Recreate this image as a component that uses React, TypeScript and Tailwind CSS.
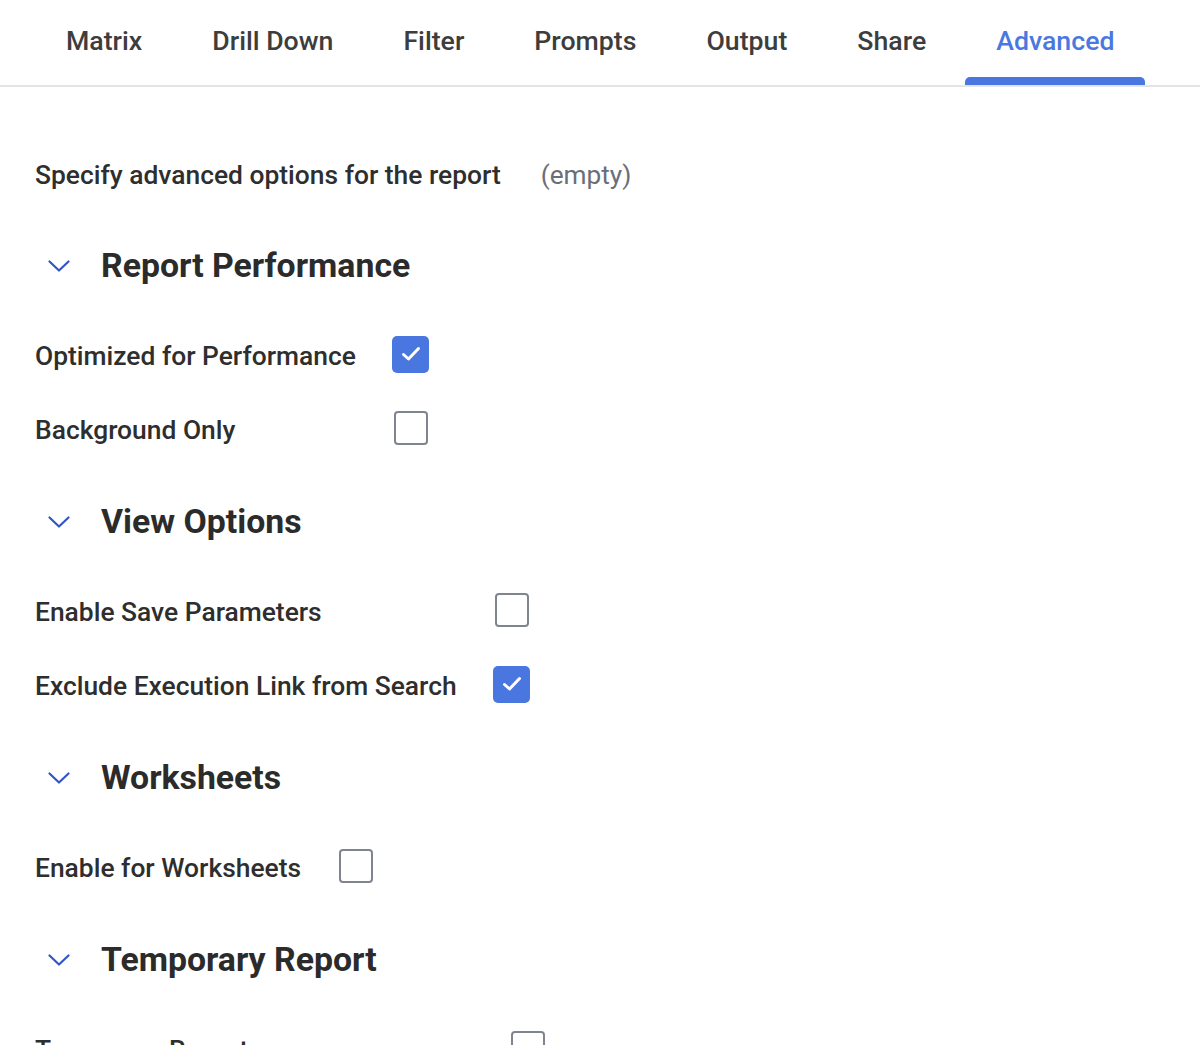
import React from "react";

const tabs = ["Matrix", "Drill Down", "Filter", "Prompts", "Output", "Share", "Advanced"];

function Chevron() {
  return (
    <svg width="22" height="12" viewBox="0 0 22 12" className="ml-[13px] mr-[31px] shrink-0">
      <path d="M1.5 1.5 L11 10.5 L20.5 1.5" fill="none" stroke="#2f56c9" strokeWidth="2.2" strokeLinecap="round" strokeLinejoin="round" />
    </svg>
  );
}

function Checkbox({ checked }: { checked: boolean }) {
  return (
    <div className="w-[38px] h-[38px] mb-[6px] flex items-center justify-center">
      {checked ? (
        <div className="w-[37px] h-[37px] rounded-[5px] bg-[#4a76e0] flex items-center justify-center">
          <svg width="20" height="16" viewBox="0 0 20 16">
            <path d="M2.5 8.5 L7.5 13 L17.5 2.5" fill="none" stroke="#ffffff" strokeWidth="3" strokeLinecap="round" strokeLinejoin="round" />
          </svg>
        </div>
      ) : (
        <div className="w-[34px] h-[34px] rounded-[4px] border-2 border-[#80848f] bg-white" />
      )}
    </div>
  );
}

function Section({ title, rows, labelMin }: { title: string; rows: [string, boolean][]; labelMin?: string }) {
  return (
    <div>
      <div className="h-[108px] flex items-center">
        <Chevron />
        <span className="text-[33.8px] font-bold text-[#2b2b2b] leading-none">{title}</span>
      </div>
      <div className="grid grid-cols-[auto_auto] w-fit gap-x-[36px]">
        {rows.map(([label, checked]) => (
          <React.Fragment key={label}>
            <div className={`h-[74px] flex items-center text-[26.4px] text-[#2e2e2e] font-medium ${labelMin ?? ""}`}>{label}</div>
            <div className="h-[74px] flex items-center">
              <Checkbox checked={checked} />
            </div>
          </React.Fragment>
        ))}
      </div>
    </div>
  );
}

export default function App() {
  return (
    <div className="w-[1200px] h-[1045px] overflow-hidden bg-white" style={{ fontFamily: "Roboto, 'Noto Sans', sans-serif" }}>
      <div className="h-[87px] flex pl-[35px] gap-[8px] border-b-2 border-[#e4e4e8]">
        {tabs.map((t) => {
          const active = t === "Advanced";
          return (
            <div key={t} className="relative px-[31px] flex items-center h-[85px]">
              <span className={`text-[26.7px] font-medium leading-none -mt-[3px] ${active ? "text-[#4a78e0]" : "text-[#3d3d3d]"}`}>{t}</span>
              {active && <div className="absolute left-0 right-0 bottom-0 h-[8px] rounded-t-[5px] bg-[#4a76e0]" />}
            </div>
          );
        })}
      </div>
      <div className="px-[35px] pt-[53px]">
        <div className="h-[72px] flex items-center gap-[40px]">
          <span className="text-[26.4px] text-[#2e2e2e] font-medium">Specify advanced options for the report</span>
          <span className="text-[26.2px] text-[#6b6e78]">(empty)</span>
        </div>
        <Section title="Report Performance" rows={[["Optimized for Performance", true], ["Background Only", false]]} />
        <Section title="View Options" rows={[["Enable Save Parameters", false], ["Exclude Execution Link from Search", true]]} />
        <Section title="Worksheets" rows={[["Enable for Worksheets", false]]} />
        <Section title="Temporary Report" rows={[["Temporary Report", false]]} labelMin="min-w-[438px]" />
      </div>
    </div>
  );
}
